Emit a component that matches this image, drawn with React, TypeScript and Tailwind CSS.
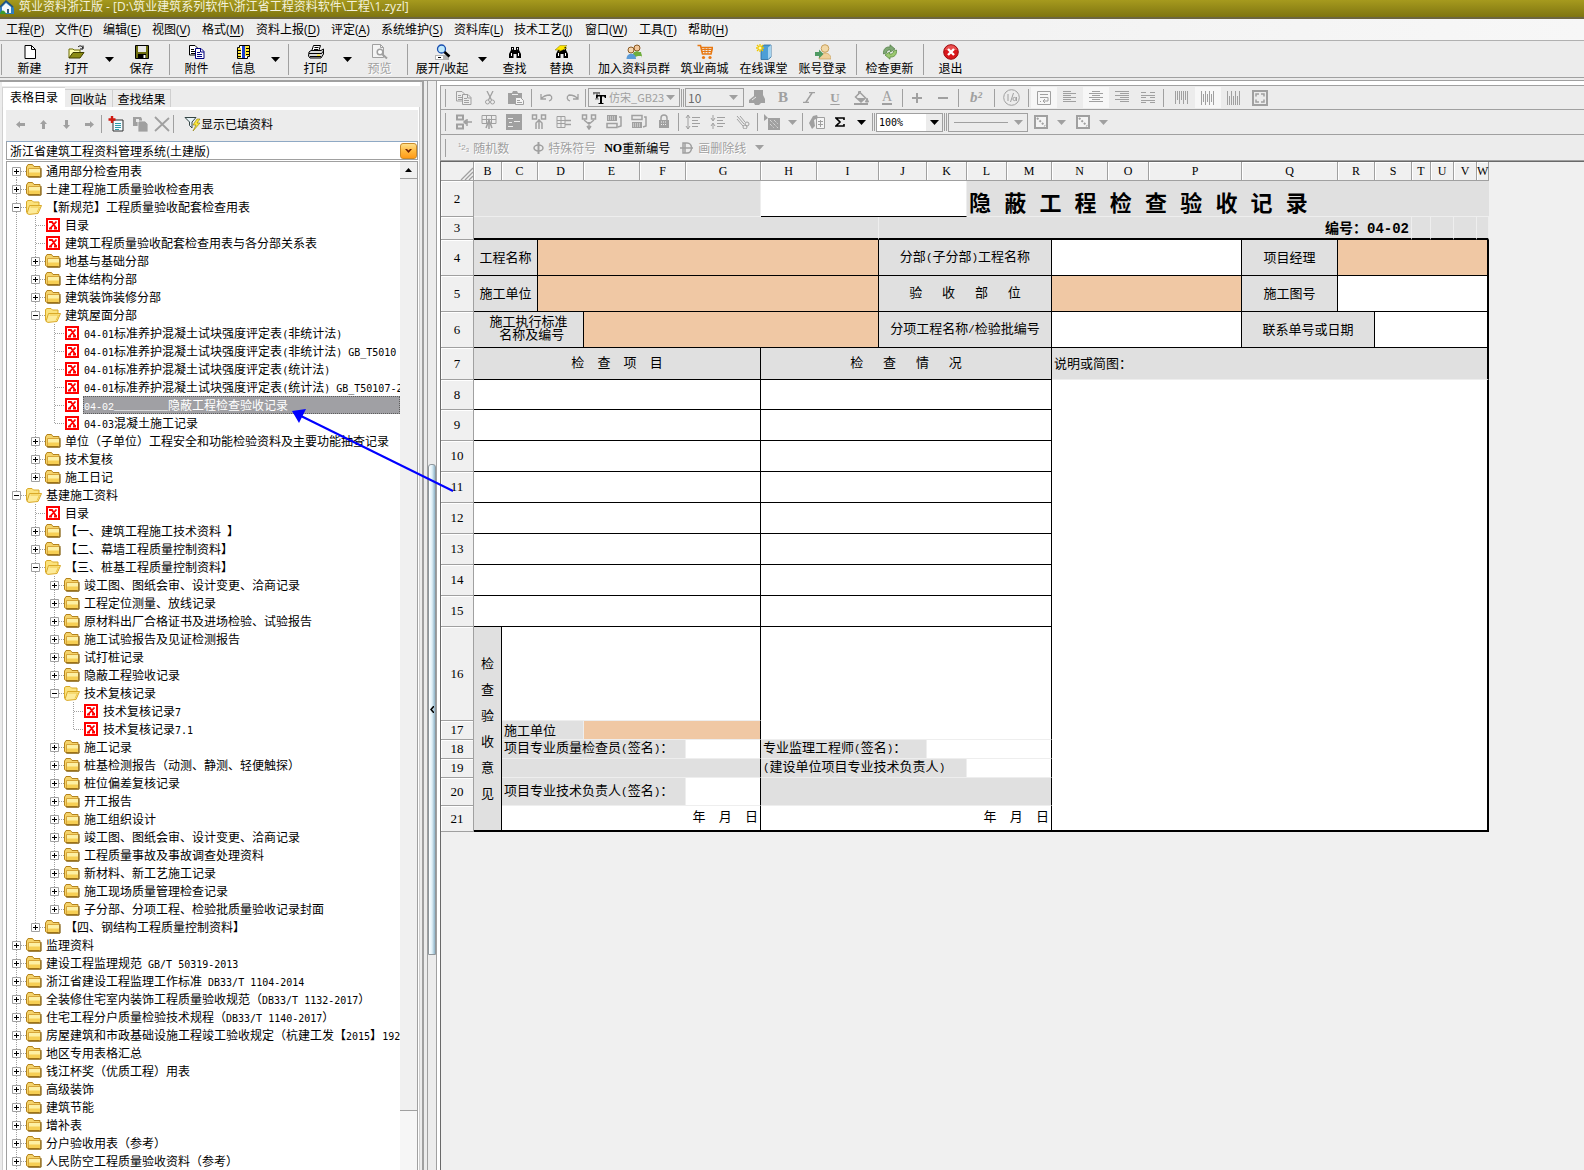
import React from "react";
import type { ReactNode } from "react";

/* ---------- shared text helpers ---------- */

const CJK = "font-['Noto_Sans_CJK_SC',sans-serif]";

/** Sets Latin runs in a half-width monospace beside full-width Chinese. */
function Mixed({ text, latin = "font-['DejaVu_Sans_Mono',monospace] text-[10px]" }: { text: string; latin?: string }) {
  return (
    <>
      {text.split(/([\x20-\x7e]+)/).map((part, i) =>
        i % 2 === 1 ? (
          <span key={i} className={latin}>
            {part}
          </span>
        ) : (
          part
        ),
      )}
    </>
  );
}

/* ---------- small drawings ---------- */

function Svg({ w = 16, h = 16, children, className = "" }: { w?: number; h?: number; children: ReactNode; className?: string }) {
  return (
    <svg width={w} height={h} viewBox={`0 0 ${w} ${h}`} className={`shrink-0 ${className}`} aria-hidden="true">
      {children}
    </svg>
  );
}

const Down = ({ color = "#000" }: { color?: string }) => (
  <Svg w={9} h={5}>
    <path d="M0 0h9L4.500 5z" fill={color} />
  </Svg>
);

const HouseLogo = () => (
  <Svg w={14} h={14}>
    <path d="M0 8L6 1l8 7v6H0z" fill="#2f7fc0" />
    <path d="M2 7l4-4 5 4v6H2z" fill="#f4f8fb" />
    <path d="M0 7L6 1l7 6" fill="none" stroke="#1d4f80" strokeWidth="1.500" />
    <path d="M0 14c1-5 5-4 6 0z" fill="#3f9a2c" />
    <path d="M7 9h2v4H7z" fill="#385f80" />
  </Svg>
);

const NewIcon = () => (
  <Svg w={12} h={14}>
    <path d="M1 .5h6.500l4 4v9H1z" fill="#fff" stroke="#000" />
    <path d="M7.500.5v4h4" fill="none" stroke="#000" />
  </Svg>
);
const OpenIcon = () => (
  <Svg w={17} h={14}>
    <path d="M1 13V4h4l1 1h6v3" fill="#ffffb0" stroke="#6b6b00" />
    <path d="M1 13l4-5.500h11L12 13z" fill="#8a8a12" stroke="#3f3f00" />
    <path d="M10 2c2-2 4-1 5 1M15 .5V4h-3" fill="none" stroke="#000" />
  </Svg>
);
const SaveIcon = () => (
  <Svg w={14} h={14}>
    <path d="M.5.5h13v13h-13z" fill="#6e6e10" stroke="#000" />
    <path d="M3 1h8v6H3z" fill="#e8e8e8" />
    <path d="M3 9h8v5H3z" fill="#000" />
    <path d="M8.500 10h2v3h-2z" fill="#fff" />
  </Svg>
);
const CopyIcon = ({ ink = "#000080", paper = "#fff", first = "#000" }: { ink?: string; paper?: string; first?: string }) => (
  <Svg w={16} h={14}>
    <path d="M.5.5h5.500l2.500 2.500v7h-8z" fill={paper} stroke={first} />
    <path d="M2 4.500h3M2 6.500h4M2 8.500h4" stroke={first} />
    <path d="M6.500 3.500h5.500l3 3v7H6.500z" fill={paper} stroke={ink} />
    <path d="M11.500 3.500v3.500H15M8 7.500h3M8 9.500h5M8 11.500h5" fill="none" stroke={ink} />
  </Svg>
);
const InfoIcon = () => (
  <Svg w={13} h={14}>
    <path d="M2.500.5h10v11h-2v2H.5V2.500h2z" fill="#fff" stroke="#000" />
    <path d="M1 3h3v10H1zM8 1h4v10H8z" fill="#ffe83a" />
    <path d="M5 1h3v12H5z" fill="#1c3fd0" />
    <path d="M1 5.500h3M1 8.500h3M1 11.500h3M9 3.500h3M9 6.500h3M9 9.500h3" stroke="#000" />
  </Svg>
);
const PrintIcon = () => (
  <Svg w={16} h={14}>
    <path d="M5.500.5h7l-2 6h-7z" fill="#fff" stroke="#000" />
    <path d="M6.500 2.500h4M6 4.500h4" stroke="#000" />
    <path d="M1 7l2-1.500h10L15.500 4v5L13 13H2L.5 11z" fill="#d8d8d8" stroke="#000" />
    <path d="M1 8.500h12M2 11.500h11M13 9l2.500-3" stroke="#000" fill="none" />
    <path d="M9 9.500h3v1.500H9z" fill="#ffe83a" />
  </Svg>
);
const PreviewIcon = () => (
  <Svg w={16} h={15}>
    <path d="M.5.5h8l3 3v10H.5z" fill="#f4f4f4" stroke="#a0a0a0" />
    <path d="M8.500.5v3h3" fill="none" stroke="#a0a0a0" />
    <circle cx="8" cy="8" r="2.800" fill="#fff" stroke="#a0a0a0" strokeWidth="1.500" />
    <path d="M10 10l5 4.500" stroke="#a0a0a0" strokeWidth="2" />
  </Svg>
);
const ExpandIcon = () => (
  <Svg w={17} h={16}>
    <path d="M1 11h14v5H1z" fill="#b4b4b4" />
    <path d="M2 12h7v3H2z" fill="#fff" />
    <path d="M4 13.500h3" stroke="#000" />
    <circle cx="7.500" cy="5" r="4" fill="#bfe9fb" stroke="#1a4fb0" strokeWidth="1.300" />
    <path d="M10.500 8l5 4.500" stroke="#000" strokeWidth="2.600" />
  </Svg>
);
const FindIcon = ({ bolt = false }: { bolt?: boolean }) => (
  <Svg w={16} h={14}>
    <path d="M4 2h3v3h2V2h3v3l2 4v4H9.500V9h-3v4H2V9l2-4z" fill="#000" />
    <path d="M4.500 8v3M11.500 8v3M5.500 3v1.500M10.500 3v1.500" stroke="#fff" />
    {bolt && <path d="M1 5l5-4.500h7L10 3h3L5 6.500 6 5z" fill="#ffe600" stroke="#8a7a00" strokeWidth=".5" />}
  </Svg>
);
const GroupIcon = () => (
  <Svg>
    <circle cx="11" cy="4" r="3" fill="#f2c79a" stroke="#8a5a24" />
    <path d="M6 14c0-9 10-9 10 0l-1-3z" fill="#6fae3d" />
    <path d="M8 8h7l.8 4H8z" fill="#6fae3d" />
    <circle cx="5" cy="6" r="3" fill="#f7d5ad" stroke="#8a5a24" />
    <path d="M.5 15c0-7 9.500-7 9.500 0z" fill="#5b9bd8" />
  </Svg>
);
const CartIcon = () => (
  <Svg>
    <path d="M.5 1.500h3l2 8.500h8.500l1.500-6.500H4" fill="none" stroke="#e87812" strokeWidth="1.600" />
    <path d="M5 5.500h10M5 7.500h9M8 4v6M11 4v6" stroke="#e87812" />
    <circle cx="6.500" cy="13.500" r="1.600" fill="#e87812" />
    <circle cx="13" cy="13.500" r="1.600" fill="#e87812" />
  </Svg>
);
const ClassIcon = () => (
  <Svg>
    <path d="M5 3l3-2h7v12l-3 2.500H5z" fill="#4d9fd6" stroke="#2a6a9c" strokeWidth=".8" />
    <path d="M12 3.500V15l3-2.500V1z" fill="#a7d4ef" />
    <path d="M4 0v8M0 4h8M1 1l6 6M7 1L1 7" stroke="#f0c800" strokeWidth="1.300" />
    <circle cx="4" cy="4" r="1.500" fill="#fff9b0" />
  </Svg>
);
const LoginIcon = () => (
  <Svg>
    <circle cx="10" cy="4.500" r="3.800" fill="#f2d9a8" stroke="#c8a05c" />
    <path d="M4 15c0-8 12-8 12 0z" fill="#efd09a" stroke="#c8a05c" strokeWidth=".7" />
    <path d="M0 8h4V5.500L8.500 10 4 14.500V12H0z" fill="#4f9a63" />
  </Svg>
);
const UpdateIcon = () => (
  <Svg>
    <path d="M1.500 10C1 5 4 2.500 8 3V.8L13 5 8.500 8V6C6 5.500 4.500 7 4.500 9z" fill="#7fa874" stroke="#4c7a3f" strokeWidth=".7" />
    <path d="M14.500 6c.5 5-2.500 7.500-6.500 7v2.200L3 11l4.500-3v2c2.500.5 4-1 4-3z" fill="#9cc870" stroke="#4c8233" strokeWidth=".7" />
  </Svg>
);
const ExitIcon = () => (
  <Svg>
    <circle cx="8" cy="8" r="7.300" fill="#d8171b" stroke="#9c0a0d" />
    <path d="M1.800 6C3 2 6 1.200 8 1.200S13 2 14.200 6z" fill="#f06a66" opacity=".7" />
    <path d="M5 5l6 6M11 5l-6 6" stroke="#fff" strokeWidth="2.400" />
  </Svg>
);

const ClosedFolder = () => (
  <Svg w={16} h={14}>
    <path d="M1.500 3.500L3 1.500h4l1.500 1.500h5l1 2v7l-1 1H2.500l-1-1z" fill="#8a6a1a" opacity=".55" transform="translate(1 1)" />
    <path d="M.5 11.500V3L2 .5h4.500L8 2.500h6v9l-1 1h-11z" fill="#f5d36a" stroke="#b4831c" />
    <path d="M3 4.500h11v7H3z" fill="#fdf0a4" />
    <path d="M3 8.500h11v3.500H3z" fill="#f6cf55" />
    <path d="M2.500 12V4.500H14" fill="none" stroke="#d7a63a" />
    <path d="M15 4v9H2" fill="none" stroke="#86600f" />
  </Svg>
);
const OpenFolder = () => (
  <Svg w={16} h={15}>
    <path d="M.5 12.500V1.500L2 .5h4l1.500 1.500H13V5" fill="#fbe27c" stroke="#d9a928" />
    <path d="M3.500 5.500h12L12 13.500l-9 .9-2-1z" fill="#fdeb9a" stroke="#d9a928" />
    <path d="M4.500 7h9l-2.500 5.500" fill="none" stroke="#f0c846" />
  </Svg>
);
const SheetIcon = () => (
  <Svg w={14} h={14}>
    <path d="M0 0h14v14H0z" fill="#f00" />
    <path d="M2 2h10v10H2z" fill="#fff" />
    <path d="M3 4h3l4 6h1M10.500 3.500L4.500 10M3 10.500h3M8 10.500h3" fill="none" stroke="#f00" strokeWidth="1.800" />
  </Svg>
);

/* ---------- title, menu and main toolbar ---------- */

const menus: [string, string, string][] = [
  ["工程", "P", "w-[49px]"],
  ["文件", "F", "w-[48px]"],
  ["编辑", "E", "w-[49px]"],
  ["视图", "V", "w-[50px]"],
  ["格式", "M", "w-[54px]"],
  ["资料上报", "D", "w-[75px]"],
  ["评定", "A", "w-[50px]"],
  ["系统维护", "S", "w-[73px]"],
  ["资料库", "L", "w-[60px]"],
  ["技术工艺", "J", "w-[71px]"],
  ["窗口", "W", "w-[54px]"],
  ["工具", "T", "w-[49px]"],
  ["帮助", "H", "w-[49px]"],
];

function MenuBar() {
  return (
    <nav className="flex h-[22px] shrink-0 items-center border-b border-[#b0b0b0] bg-gradient-to-r from-[#ececec] to-[#f7f7f7] pl-[6px] font-['Open_Sans','Noto_Sans_CJK_SC',sans-serif] text-[12px] leading-[16px] text-black">
      {menus.map(([label, key, width]) => (
        <button key={label} type="button" className={`${width} shrink-0 whitespace-nowrap text-left`}>
          {label}(<span className="underline underline-offset-2">{key}</span>)
        </button>
      ))}
    </nav>
  );
}

function BigButton({ icon, label, width = "w-[47px]", disabled = false }: { icon: ReactNode; label: string; width?: string; disabled?: boolean }) {
  return (
    <button
      type="button"
      disabled={disabled}
      className={`${width} flex shrink-0 flex-col items-center whitespace-nowrap ${disabled ? "text-[#a0a0a0] [text-shadow:1px_1px_0_#fff]" : "text-black"}`}
    >
      <span className="flex h-[17px] items-center">{icon}</span>
      <span className="leading-[15px]">{label}</span>
    </button>
  );
}

const BigSep = () => <span className="ml-1 mr-[3px] h-[31px] w-px shrink-0 bg-[#a0a0a0]" />;
const BigDrop = ({ label, width = "w-[17px]" }: { label: string; width?: string }) => (
  <button type="button" aria-label={label} className={`${width} flex shrink-0 items-center justify-center`}>
    <Down />
  </button>
);

function MainToolbar() {
  return (
    <div className="flex h-[37px] shrink-0 items-center border-b border-[#a0a0a0] bg-[#ececec] text-[12px]">
      <span className="mr-1 h-[31px] w-[2px] shrink-0 border-r border-[#a0a0a0]" />
      <BigButton icon={<NewIcon />} label="新建" />
      <BigButton icon={<OpenIcon />} label="打开" />
      <BigDrop label="打开选项" width="w-[18px]" />
      <BigButton icon={<SaveIcon />} label="保存" />
      <BigSep />
      <BigButton icon={<CopyIcon />} label="附件" />
      <BigButton icon={<InfoIcon />} label="信息" />
      <BigDrop label="信息选项" />
      <BigSep />
      <BigButton icon={<PrintIcon />} label="打印" />
      <BigDrop label="打印选项" />
      <BigButton icon={<PreviewIcon />} label="预览" disabled />
      <BigSep />
      <BigButton icon={<ExpandIcon />} label="展开/收起" width="w-[62px]" />
      <BigDrop label="展开选项" width="w-[18px]" />
      <BigButton icon={<FindIcon />} label="查找" />
      <BigButton icon={<FindIcon bolt />} label="替换" />
      <BigSep />
      <BigButton icon={<GroupIcon />} label="加入资料员群" width="w-[82px]" />
      <BigButton icon={<CartIcon />} label="筑业商城" width="w-[59px]" />
      <BigButton icon={<ClassIcon />} label="在线课堂" width="w-[59px]" />
      <BigButton icon={<LoginIcon />} label="账号登录" width="w-[59px]" />
      <BigSep />
      <BigButton icon={<UpdateIcon />} label="检查更新" width="w-[59px]" />
      <BigSep />
      <BigButton icon={<ExitIcon />} label="退出" />
    </div>
  );
}

/* ---------- directory tree ---------- */

type Kind = "+" | "-" | "x";
type Node = [depth: number, kind: Kind, label: string];

const nodes: Node[] = [
  [0, "+", "通用部分检查用表"],
  [0, "+", "土建工程施工质量验收检查用表"],
  [0, "-", "【新规范】工程质量验收配套检查用表"],
  [1, "x", "目录"],
  [1, "x", "建筑工程质量验收配套检查用表与各分部关系表"],
  [1, "+", "地基与基础分部"],
  [1, "+", "主体结构分部"],
  [1, "+", "建筑装饰装修分部"],
  [1, "-", "建筑屋面分部"],
  [2, "x", "04-01标准养护混凝土试块强度评定表(非统计法)"],
  [2, "x", "04-01标准养护混凝土试块强度评定表(非统计法) GB_T5010"],
  [2, "x", "04-01标准养护混凝土试块强度评定表(统计法)"],
  [2, "x", "04-01标准养护混凝土试块强度评定表(统计法) GB_T50107-2"],
  [2, "x", "04-02_________隐蔽工程检查验收记录"],
  [2, "x", "04-03混凝土施工记录"],
  [1, "+", "单位（子单位）工程安全和功能检验资料及主要功能抽查记录"],
  [1, "+", "技术复核"],
  [1, "+", "施工日记"],
  [0, "-", "基建施工资料"],
  [1, "x", "目录"],
  [1, "+", "【一、建筑工程施工技术资料 】"],
  [1, "+", "【二、幕墙工程质量控制资料】"],
  [1, "-", "【三、桩基工程质量控制资料】"],
  [2, "+", "竣工图、图纸会审、设计变更、洽商记录"],
  [2, "+", "工程定位测量、放线记录"],
  [2, "+", "原材料出厂合格证书及进场检验、试验报告"],
  [2, "+", "施工试验报告及见证检测报告"],
  [2, "+", "试打桩记录"],
  [2, "+", "隐蔽工程验收记录"],
  [2, "-", "技术复核记录"],
  [3, "x", "技术复核记录7"],
  [3, "x", "技术复核记录7.1"],
  [2, "+", "施工记录"],
  [2, "+", "桩基检测报告（动测、静测、轻便触探）"],
  [2, "+", "桩位偏差复核记录"],
  [2, "+", "开工报告"],
  [2, "+", "施工组织设计"],
  [2, "+", "竣工图、图纸会审、设计变更、洽商记录"],
  [2, "+", "工程质量事故及事故调查处理资料"],
  [2, "+", "新材料、新工艺施工记录"],
  [2, "+", "施工现场质量管理检查记录"],
  [2, "+", "子分部、分项工程、检验批质量验收记录封面"],
  [1, "+", "【四、钢结构工程质量控制资料】"],
  [0, "+", "监理资料"],
  [0, "+", "建设工程监理规范 GB/T 50319-2013"],
  [0, "+", "浙江省建设工程监理工作标准 DB33/T 1104-2014"],
  [0, "+", "全装修住宅室内装饰工程质量验收规范（DB33/T 1132-2017）"],
  [0, "+", "住宅工程分户质量检验技术规程（DB33/T 1140-2017）"],
  [0, "+", "房屋建筑和市政基础设施工程竣工验收规定（杭建工发【2015】192"],
  [0, "+", "地区专用表格汇总"],
  [0, "+", "钱江杯奖（优质工程）用表"],
  [0, "+", "高级装饰"],
  [0, "+", "建筑节能"],
  [0, "+", "增补表"],
  [0, "+", "分户验收用表（参考）"],
  [0, "+", "人民防空工程质量验收资料（参考）"],
];

const SELECTED = 13;

/** True when another node of the given level follows before its parent ends. */
function continues(index: number, level: number) {
  if (level === 0) return true;
  for (let i = index + 1; i < nodes.length; i++) {
    if (nodes[i][0] < level) return false;
    if (nodes[i][0] === level) return true;
  }
  return false;
}

function TreeRow({ index }: { index: number }) {
  const [depth, kind, label] = nodes[index];
  const selected = index === SELECTED;
  const cells = Array.from({ length: depth + 1 }, (_, level) => level);
  return (
    <li className="flex h-[18px] items-center overflow-hidden whitespace-nowrap" role="treeitem" aria-selected={selected} aria-level={depth + 1}>
      {cells.map((level) => {
        const own = level === depth;
        const more = continues(index, level);
        return (
          <svg key={level} width="19" height="18" viewBox="0 0 19 18" className="shrink-0" aria-hidden="true">
            {(own || more) && (
              <path
                d={own && !more ? "M9.5 0V9" : own && index === 0 ? "M9.5 9V18" : "M9.5 0V18"}
                stroke="#a0a0a0"
                strokeDasharray="1 1"
                fill="none"
              />
            )}
            {own && <path d="M10 9.500H19" stroke="#a0a0a0" strokeDasharray="1 1" />}
            {own && kind !== "x" && (
              <>
                <path d="M5.500 5.500h8v8h-8z" fill="#fff" stroke="#a0a0a0" />
                <path d={kind === "+" ? "M7 9.500h5M9.500 7v5" : "M7 9.500h5"} stroke="#000" />
              </>
            )}
          </svg>
        );
      })}
      <span className="flex w-4 shrink-0 items-center justify-center">
        {kind === "+" ? <ClosedFolder /> : kind === "-" ? <OpenFolder /> : <SheetIcon />}
      </span>
      <span
        className={
          selected
            ? "ml-[3px] h-[18px] flex-1 border border-dotted border-[#5c5c5c] bg-[#a0a0a4] leading-[15px] text-white"
            : "ml-[4px] h-[18px] flex-1 leading-[17px]"
        }
      >
        {selected ? <Mixed text={label} latin="font-['Liberation_Mono',monospace] text-[10px]" /> : <Mixed text={label} />}
      </span>
    </li>
  );
}

const panelTools: [string, ReactNode][] = [
  ["左移", <Svg w={9} h={9}><path d="M0 4.500L4 1v2h5v3H4v2z" fill="#a0a0a0" /></Svg>],
  ["上移", <Svg w={9} h={9}><path d="M4.500 0L8 4H6v5H3V4H1z" fill="#a0a0a0" /></Svg>],
  ["下移", <Svg w={9} h={9}><path d="M4.500 9L8 5H6V0H3v5H1z" fill="#a0a0a0" /></Svg>],
  ["右移", <Svg w={9} h={9}><path d="M9 4.500L5 1v2H0v3h5v2z" fill="#a0a0a0" /></Svg>],
];

const SmallSep = () => <span className="h-[18px] w-px shrink-0 bg-[#a0a0a0]" />;

function SidePanel() {
  return (
    <aside className="flex w-[424px] shrink-0 flex-col border-r-2 border-[#a0a0a0] border-t border-t-[#a0a0a0] bg-[#ececec] pl-[2px] pr-[2px]">
      <div className="h-1 shrink-0 bg-white" />
      <div className="flex h-[21px] shrink-0 items-end text-[12px]" role="tablist">
        <button type="button" role="tab" aria-selected="true" className="h-[20px] w-[63px] border-l border-t border-[#d4d4d4] bg-white pb-[2px] leading-[18px]">
          表格目录
        </button>
        <button type="button" role="tab" aria-selected="false" className="h-[18px] w-[48px] border-r border-t border-[#cfcfcf] leading-[17px]">
          回收站
        </button>
        <button type="button" role="tab" aria-selected="false" className="h-[18px] w-[58px] border-r border-t border-[#cfcfcf] leading-[17px]">
          查找结果
        </button>
      </div>
      <div className="flex min-h-0 flex-1 flex-col border-l border-r border-[#d0d0d0] bg-white pl-[3px] pr-px pt-[3px]">
        <div className="flex h-[31px] shrink-0 items-center bg-[#ececec] pb-[3px]">
          <span className="flex items-center pl-[3px]">
            {panelTools.map(([name, icon]) => (
              <button key={name} type="button" aria-label={name} className="flex h-5 w-[23px] items-center justify-center">
                {icon}
              </button>
            ))}
          </span>
          <SmallSep />
          <button type="button" aria-label="添加" className="flex h-5 w-[27px] items-center justify-center">
            <Svg>
              <path d="M5 4h10v11H5z" fill="#f4fbff" stroke="#303030" />
              <path d="M7 7.500h6M7 9.500h6M7 11.500h6M7 13.500h4" stroke="#2a9aa8" />
              <path d="M4 0v7M.5 3.500h7" stroke="#d01a10" strokeWidth="2.400" />
            </Svg>
          </button>
          <button type="button" aria-label="复制" className="flex h-5 w-[22px] items-center justify-center">
            <Svg w={15}>
              <path d="M0 1h8l1 2v7H0z" fill="#a0a0a0" />
              <path d="M5 5h7l3 3v8H5z" fill="#a0a0a0" stroke="#ececec" strokeWidth=".8" />
              <path d="M3 3h3v3H3z" fill="#ececec" />
            </Svg>
          </button>
          <button type="button" aria-label="删除" className="flex h-5 w-[22px] items-center justify-center">
            <Svg>
              <path d="M1 1l14 14M15 2L1 15" stroke="#a0a0a0" strokeWidth="1.800" />
            </Svg>
          </button>
          <SmallSep />
          <button type="button" className="flex items-center pl-[10px] text-[12px] leading-[18px]">
            <Svg w={17}>
              <path d="M1 1.500h11L8 6v6L5.500 9.500V6z" fill="#e8f4f8" stroke="#344" />
              <path d="M13 3l-4 6h3l-3 6 7-8h-3l3-4z" fill="#ffe83a" stroke="#8a7a00" strokeWidth=".6" />
            </Svg>
            显示已填资料
          </button>
        </div>
        <div className="flex h-[19px] shrink-0 items-center border border-[#a0a0a0] border-t-[#8fa9c4] bg-white pl-[3px] text-[12px]">
          <select aria-label="资料管理系统" className="h-[17px] flex-1 appearance-none bg-white leading-[17px] outline-none" defaultValue="土建版">
            <option value="土建版">浙江省建筑工程资料管理系统(土建版)</option>
          </select>
          <span className="flex h-[16px] w-[17px] items-center justify-center rounded-[3px] border border-[#c98a2a] bg-gradient-to-b from-[#ffe08a] via-[#ffb93c] to-[#ff9a14]">
            <Svg w={7} h={4}>
              <path d="M0 0h2l1.500 1.500L5 0h2L3.500 4z" fill="#6b1c00" />
            </Svg>
          </span>
        </div>
        <div className="mt-px flex min-h-0 flex-1 border-l border-r border-t border-[#a0a0a0]">
          <ul className="min-w-0 flex-1 overflow-hidden text-[12px]" role="tree">
            {nodes.map((_, i) => (
              <TreeRow key={i} index={i} />
            ))}
          </ul>
          <div className="flex w-[17px] shrink-0 flex-col bg-[#f6f6f6]">
            <button type="button" aria-label="向上滚动" className="flex h-[17px] w-full shrink-0 items-center justify-center border-b border-[#a0a0a0] bg-[#f0f0f0]">
              <Svg w={7} h={4}>
                <path d="M0 4h7L3.500 0z" fill="#000" />
              </Svg>
            </button>
            <div className="flex-[932] border-b border-[#a0a0a0] bg-[#f0f0f0]" />
            <div className="flex-[59]" />
          </div>
        </div>
      </div>
    </aside>
  );
}

function Splitter() {
  return (
    <div className="ml-[3px] flex w-[10px] shrink-0 flex-col border-l border-r border-[#a0a0a0] bg-[#ececec]">
      <div className="flex-[384]" />
      <button
        type="button"
        aria-label="收起目录"
        className="flex flex-[490] items-center justify-center rounded-t-[3px] border border-[#8f979c] bg-gradient-to-r from-white via-[#dff0f8] to-[#8fb4c8]"
      >
        <Svg w={4} h={7}>
          <path d="M4 0L1 3.500 4 7" fill="none" stroke="#000" strokeWidth="1.500" />
        </Svg>
      </button>
      <div className="flex-[215]" />
    </div>
  );
}

/* ---------- formatting toolbars ---------- */

const G = "#a0a0a0";
const Grip = () => <span className="ml-1 mr-[5px] h-[18px] w-px shrink-0 bg-[#a0a0a0]" />;
const Sep = () => <span className="ml-[2px] mr-px h-[18px] w-px shrink-0 bg-[#a0a0a0]" />;
const DoubleSep = () => <span className="mx-px h-[18px] w-[3px] shrink-0 border-l border-r border-[#a0a0a0]" />;

function Tool({ name, children, width = "w-[26px]", on = false, enabled = false }: { name: string; children: ReactNode; width?: string; on?: boolean; enabled?: boolean }) {
  return (
    <button
      type="button"
      disabled={!enabled}
      aria-label={name}
      className={`${width} flex h-[21px] shrink-0 items-center justify-center text-[#a0a0a0] ${on ? "bg-[#f7f7f7]" : ""}`}
    >
      {children}
    </button>
  );
}

const Lines = ({ rows }: { rows: [number, number][] }) => (
  <Svg w={14} h={13}>
    {rows.map(([x, len], i) => (
      <path key={i} d={`M${x} ${i * 2 + 0.5}h${len}`} stroke={G} />
    ))}
  </Svg>
);
const Bars = ({ bars }: { bars: [number, number][] }) => (
  <Svg w={14} h={14}>
    {bars.map(([y, len], i) => (
      <path key={i} d={`M${i * 2 + 0.5} ${y}v${len}`} stroke={G} />
    ))}
  </Svg>
);
const BorderIcon = () => (
  <Svg w={14} h={14}>
    <path d="M1 1h12v12H1z" fill="#f4f4f4" stroke={G} strokeWidth="2" />
    <path d="M3 3l8 8" stroke={G} strokeWidth="2" strokeDasharray="2 1.500" />
  </Svg>
);

const rowTools: [string, ReactNode][] = [
  ["插入单元格", <><path d="M1 1.500h6v4H1zM1 10.500h6v4H1z" fill="#ececec" stroke={G} strokeWidth="2" /><path d="M8 8h8M10 6L8 8l2 2M11 8V5M11 8v4" fill="none" stroke={G} strokeWidth="1.500" /></>],
  ["删除单元格", <><path d="M1 1.500h14v8H1zM1 5.500h14M5.500 1v8M10.500 1v8" fill="none" stroke={G} /><path d="M5 14l3-8 3 8M8 6v9" fill="none" stroke={G} strokeWidth="1.500" /></>],
  ["单元格", <><path d="M0 0h16v16H0z" fill={G} /><path d="M2 4.500h5M3 8.500h3M2 12.500h5M8 7.500h6" stroke="#ececec" /></>],
  ["插入列", <><path d="M1.500 1h4v4h-4zM10.500 1h4v4h-4z" fill="none" stroke={G} strokeWidth="1.500" /><path d="M8 5v10M5 15V9l3-3 3 3v6" fill="none" stroke={G} strokeWidth="1.500" /></>],
  ["插入行", <><path d="M1 2.500h8v11H1zM1 6.500h8M1 9.500h8M5 2v12" fill="none" stroke={G} /><path d="M9 6.500h6M9 10.500h6" stroke={G} strokeWidth="1.500" /></>],
  ["合并", <><path d="M1.500 1h4v4h-4zM10.500 1h4v4h-4z" fill="none" stroke={G} strokeWidth="1.500" /><path d="M3 6l5 4 5-4M8 8v7M6 12l2 3 2-3" fill="none" stroke={G} strokeWidth="1.500" /></>],
  ["追加行", <><path d="M1 1h10v6H1z" fill={G} /><path d="M2 3h8M2 5h8" stroke="#ececec" strokeDasharray="1 1" /><path d="M1 9.500h10v4H1zM13 3h2v9l-3 1" fill="none" stroke={G} strokeWidth="1.500" /></>],
  ["删除行", <><path d="M1 8h10v6H1z" fill={G} /><path d="M2 10h8M2 12h8" stroke="#ececec" strokeDasharray="1 1" /><path d="M1 1.500h10v4H1zM13 3h2v9l-3 1" fill="none" stroke={G} strokeWidth="1.500" /></>],
  ["锁定", <><path d="M3 6h10v8H3z" fill={G} /><path d="M5 7V4c0-4 6-4 6 0v3" fill="none" stroke={G} strokeWidth="1.500" /><path d="M5 8h6M5 10.500h6" stroke="#ececec" strokeDasharray="1 1" /></>],
];

function TextTool({ icon, label, className = "" }: { icon: ReactNode; label: string; className?: string }) {
  return (
    <button type="button" disabled className={`flex shrink-0 items-center gap-1 text-[#a0a0a0] [text-shadow:1px_1px_0_#fff] ${className}`}>
      {icon}
      {label}
    </button>
  );
}

function FormatBars() {
  return (
    <div className="shrink-0 border-b border-l border-t border-[#a0a0a0] text-[12px]">
      <div className="flex h-[24px] items-center border-b border-[#a0a0a0]">
        <Grip />
        <Tool name="复制"><CopyIcon ink={G} first={G} paper="#ececec" /></Tool>
        <Tool name="剪切">
          <Svg w={10} h={14}>
            <path d="M2 0l4.500 9M8 0L3.500 9" stroke={G} strokeWidth="1.300" />
            <circle cx="2.500" cy="11" r="2" fill="none" stroke={G} />
            <circle cx="7.500" cy="11" r="2" fill="none" stroke={G} />
          </Svg>
        </Tool>
        <Tool name="粘贴">
          <Svg w={16} h={14}>
            <path d="M0 2h4l1-2h4l1 2h4v11H0z" fill={G} />
            <path d="M4 3.500h6" stroke="#ececec" />
            <path d="M7.500 6.500h5l3 3v4h-8z" fill="#f4f4f4" stroke={G} />
            <path d="M9 9.500h3M9 11.500h5" stroke={G} />
          </Svg>
        </Tool>
        <Sep />
        <Tool name="撤销">
          <Svg w={13} h={8}><path d="M1 0v5h5M1 5c3-4 6-4 9-4 3 2 2 5-1 6" fill="none" stroke={G} strokeWidth="1.300" /></Svg>
        </Tool>
        <Tool name="重做">
          <Svg w={13} h={8}><path d="M12 0v5H7M12 5C9 1 6 1 3 1 0 3 1 6 4 7" fill="none" stroke={G} strokeWidth="1.300" /></Svg>
        </Tool>
        <span className="h-[18px] w-[3px] shrink-0 border-l border-[#a0a0a0]" />
        <div className="flex h-[19px] w-[92px] shrink-0 items-center border border-[#a0a0a0] pl-1 pr-1">
          <Svg w={13} h={13}>
            <path d="M0 1h7v2.500H6L5 2.500v5h1v1H2v-1h1v-5l-2 1H0z" fill="#777" />
            <path d="M3 4h10v3h-1l-1-1.500H9V12h1.500v1h-5v-1H7V5.500H5L4 7H3z" fill="#000" />
          </Svg>
          <select aria-label="字体" disabled className="ml-[3px] h-[17px] w-[56px] appearance-none overflow-hidden bg-transparent text-[11px] leading-[17px] text-[#a0a0a0] opacity-100" defaultValue="f">
            <option value="f">仿宋_GB23</option>
          </select>
          <span className="flex-1" />
          <Down color={G} />
        </div>
        <DoubleSep />
        <div className="flex h-[19px] w-[59px] shrink-0 items-center border border-[#a0a0a0] pl-[2px] pr-[5px]">
          <select aria-label="字号" disabled className="h-[17px] flex-1 appearance-none bg-transparent leading-[17px] text-[#6a6a6a] opacity-100" defaultValue="10">
            <option>10</option>
          </select>
          <Down color={G} />
        </div>
        <Tool name="格式刷"><Svg w={16}><path d="M5 0h9v5l2 4v4h-4l-2 2H6l-1-2H0v-3l5-4z" fill={G} /><path d="M3 10l4-3" stroke="#ececec" /></Svg></Tool>
        <Tool name="加粗"><b className="font-['Liberation_Serif',serif] text-[15px]">B</b></Tool>
        <Tool name="倾斜"><Svg w={12} h={11}><path d="M6 .5h6M0 10.500h6M9 1L3 10" stroke={G} strokeWidth="1.500" /></Svg></Tool>
        <Tool name="下划线"><b className="font-['Liberation_Serif',serif] text-[13px] leading-[14px] underline underline-offset-2">U</b></Tool>
        <Tool name="填充">
          <Svg w={15} h={14}><path d="M6 1.500l5.500 5.500L7 11 1.500 6z" fill="#ececec" stroke={G} strokeWidth="1.500" /><path d="M3 7h8l-4 4z" fill={G} /><path d="M4.500 4V.5H7" fill="none" stroke={G} /><path d="M13 7l1.500 4h-3z" fill={G} stroke={G} /><path d="M0 13h14" stroke={G} strokeWidth="2" /></Svg>
        </Tool>
        <Tool name="字体颜色"><span className="h-[15px] border-b-2 border-[#a0a0a0] font-['Liberation_Serif',serif] text-[14px] leading-[13px]">A</span></Tool>
        <Sep />
        <Tool name="增大"><Svg w={10} h={10}><path d="M5 0v10M0 5h10" stroke={G} strokeWidth="2" /></Svg></Tool>
        <Tool name="减小"><Svg w={10} h={10}><path d="M0 5h10" stroke={G} strokeWidth="2" /></Svg></Tool>
        <Sep />
        <Tool name="上标" width="w-[32px]"><b className="font-['Liberation_Serif',serif] text-[15px] italic">b²</b></Tool>
        <Sep />
        <Tool name="分数" width="w-[30px]">
          <Svg w={17} h={17}><circle cx="8.500" cy="8.500" r="7.800" fill="none" stroke={G} /><path d="M5 5v7M10.500 4l-3 9" stroke={G} /><circle cx="11.500" cy="10" r="1.600" fill="none" stroke={G} /><path d="M13.500 8v4" stroke={G} /></Svg>
        </Tool>
        <Sep />
        <span className="w-px shrink-0" />
        <Tool name="自动换行" on><Svg w={14} h={14}><path d="M.5.5h13v13H.5zM3 3.500h8M3 6.500h8v3.500H6M8 8l-2 2 2 2M3 10.500h1" fill="none" stroke={G} /></Svg></Tool>
        <Tool name="左对齐"><Lines rows={[[0, 8], [0, 13], [0, 8], [0, 13], [0, 8], [0, 13]]} /></Tool>
        <Tool name="居中" on><Lines rows={[[3, 8], [0, 14], [3, 8], [0, 14], [3, 8], [0, 14]]} /></Tool>
        <Tool name="右对齐"><Lines rows={[[0, 14], [5, 9], [0, 14], [5, 9], [0, 14], [5, 9]]} /></Tool>
        <Tool name="分散对齐">
          <Svg w={14} h={12}><path d="M0 .5h5M9 .5h5M0 3.500h14M0 5.500h5M9 5.500h5M0 8.500h14M0 10.500h5M9 10.500h5" stroke={G} /></Svg>
        </Tool>
        <Sep />
        <span className="w-1 shrink-0" />
        <Tool name="顶端对齐"><Bars bars={[[0, 13], [0, 9], [0, 13], [0, 9], [0, 13], [0, 9], [0, 13]]} /></Tool>
        <Tool name="垂直居中" on><Bars bars={[[0, 14], [3, 8], [0, 14], [3, 8], [0, 14], [3, 8], [0, 14]]} /></Tool>
        <Tool name="底端对齐"><Bars bars={[[0, 14], [5, 9], [0, 14], [5, 9], [0, 14], [5, 9], [0, 14]]} /></Tool>
        <Tool name="边框"><Svg><path d="M1 1h14v14H1z" fill="none" stroke={G} strokeWidth="2" /><path d="M4 6.500V4h3M9 4h3v2.500M12 9.500V12H9M7 12H4V9.500" fill="none" stroke={G} strokeWidth="1.500" /></Svg></Tool>
      </div>
      <div className="flex h-[25px] items-center border-b border-[#a0a0a0]">
        <Grip />
        {rowTools.map(([name, art]) => (
          <Tool key={name} name={name} width="w-[25px]"><Svg>{art}</Svg></Tool>
        ))}
        <Sep />
        <Tool name="增加行距" width="w-[25px]"><Svg w={15} h={14}><path d="M3 0v14M1 3l2-3 2 3M1 11l2 3 2-3M7 2.500h8M7 5.500h6M7 8.500h8M7 11.500h6" fill="none" stroke={G} /></Svg></Tool>
        <Tool name="减少行距" width="w-[25px]"><Svg w={15} h={14}><path d="M3 0v5M1 3l2 3 2-3M3 14V9M1 11l2-3 2 3M7 2.500h8M7 5.500h6M7 8.500h8M7 11.500h6" fill="none" stroke={G} /></Svg></Tool>
        <Tool name="链接" width="w-[25px]"><Svg w={14} h={14}><path d="M1 1l7 8M4 1l5 6M1 4l6 7" stroke={G} /><circle cx="11" cy="9" r="2" fill="none" stroke={G} /><circle cx="9" cy="12" r="2" fill="none" stroke={G} /></Svg></Tool>
        <Sep />
        <Tool name="选择区域" width="w-[25px]"><Svg><path d="M4 4h12v12H4z" fill={G} /><path d="M0 0v7l4-3z" fill={G} /><path d="M6 6l8 8M6 10l4 4M10 6l4 4" stroke="#ececec" strokeDasharray="1 1" /></Svg></Tool>
        <Tool name="选择区域选项" width="w-[16px]"><Down color={G} /></Tool>
        <Sep />
        <Tool name="公式" width="w-[25px]"><Svg><path d="M7.500 3.500h8v11h-8z" fill="#f4f4f4" stroke={G} /><path d="M9 7.500h5M9 10.500h5M11.500 6v7" stroke={G} /><path d="M0 9l4-7 4-1 1 3-4 2 1 6-3 3z" fill={G} /></Svg></Tool>
        <Tool name="求和" width="w-[22px]" enabled><Svg w={10} h={10}><path d="M9 3V1H1l4 4-4 4h8V7" fill="none" stroke="#000" strokeWidth="1.600" /></Svg></Tool>
        <Tool name="求和选项" width="w-[20px]" enabled><Down /></Tool>
        <DoubleSep />
        <div className="flex h-[19px] w-[67px] shrink-0 items-center border border-[#a0a0a0] bg-white pl-[2px]">
          <select aria-label="缩放" className="h-[17px] flex-1 appearance-none bg-white font-['DejaVu_Sans_Mono',monospace] text-[10px] leading-[17px]" defaultValue="100%">
            <option>100%</option>
          </select>
          <span className="flex h-[17px] w-[16px] items-center justify-center bg-[#ececec]"><Down /></span>
        </div>
        <DoubleSep />
        <div className="flex h-[19px] w-[80px] shrink-0 items-center border border-[#a0a0a0] pl-[5px] pr-1">
          <select aria-label="线型" disabled className="h-px w-[54px] appearance-none bg-[#a0a0a0] opacity-100" />
          <span className="flex-1" />
          <Down color={G} />
        </div>
        <Tool name="边框线" width="w-[25px]"><BorderIcon /></Tool>
        <Tool name="边框线选项" width="w-[17px]"><Down color={G} /></Tool>
        <Tool name="斜线" width="w-[25px]"><BorderIcon /></Tool>
        <Tool name="斜线选项" width="w-[17px]"><Down color={G} /></Tool>
      </div>
      <div className="flex h-[25px] items-center">
        <Grip />
        <TextTool
          className="ml-[7px]"
          label="随机数"
          icon={<span className="flex items-center font-['Liberation_Sans',sans-serif] text-[8px] leading-[12px]"><sup className="top-[-3px]">1</sup>2<sub className="bottom-[-2px]">3</sub></span>}
        />
        <TextTool
          className="ml-[24px]"
          label="特殊符号"
          icon={<Svg w={11} h={12}><path d="M5.500 0v12" stroke={G} strokeWidth="2" /><ellipse cx="5.500" cy="6" rx="4.500" ry="3" fill="none" stroke={G} strokeWidth="1.500" /></Svg>}
        />
        <button type="button" className="ml-[8px] flex shrink-0 items-center text-black">
          <span className="font-['Liberation_Serif',serif] text-[12px] font-bold">NO</span>重新编号
        </button>
        <TextTool
          className="ml-[10px]"
          label="画删除线"
          icon={<Svg w={14} h={12}><path d="M3 1h4c6 0 6 10 0 10H3zM5 1v10" fill="none" stroke={G} strokeWidth="1.500" /><path d="M0 6h13" stroke={G} strokeWidth="1.500" /></Svg>}
        />
        <Tool name="删除线选项"><Down color={G} /></Tool>
      </div>
    </div>
  );
}

/* ---------- spreadsheet ---------- */

const columns: [string, string][] = [
  ["B", "w-[28px]"], ["C", "w-[36px]"], ["D", "w-[46px]"], ["E", "w-[56px]"], ["F", "w-[46px]"], ["G", "w-[75px]"],
  ["H", "w-[56px]"], ["I", "w-[62px]"], ["J", "w-[48px]"], ["K", "w-[40px]"], ["L", "w-[40px]"], ["M", "w-[45px]"],
  ["N", "w-[56px]"], ["O", "w-[41px]"], ["P", "w-[93px]"], ["Q", "w-[96px]"], ["R", "w-[37px]"], ["S", "w-[37px]"],
  ["T", "w-[19px]"], ["U", "w-[23px]"], ["V", "w-[23px]"], ["W", "w-[12px]"],
];

const fills = { gray: "bg-[#e0e0e0]", white: "bg-white", orange: "bg-[#f0c8a4]" };
const rights = { black: "border-r border-r-black", light: "border-r border-r-[#eeeeee]", thick: "border-r-2 border-r-black", none: "" };
const bottoms = { black: "border-b border-b-black", light: "border-b border-b-[#eeeeee]", thick: "border-b-2 border-b-black", none: "" };

function Cell({
  span = 1, rows = 1, fill = "white", r = "black", b = "black", text, className = "text-center",
}: {
  span?: number; rows?: number; fill?: keyof typeof fills; r?: keyof typeof rights; b?: keyof typeof bottoms; text?: string; className?: string;
}) {
  return (
    <td colSpan={span} rowSpan={rows} className={`overflow-hidden whitespace-pre p-0 pb-[2px] ${fills[fill]} ${rights[r]} ${bottoms[b]} ${className}`}>
      {text && <Mixed text={text} latin="font-['Liberation_Mono',monospace] text-[11px]" />}
    </td>
  );
}

function Row({ n, height, children }: { n: number; height: string; children: ReactNode }) {
  return (
    <tr className={height}>
      <th
        scope="row"
        className="border-b border-r border-[#a0a0a0] bg-[#f0f0f0] p-0 pb-px text-center font-['Liberation_Serif',serif] text-[13px] font-normal shadow-[inset_1px_1px_0_#fff]"
      >
        {n}
      </th>
      {children}
    </tr>
  );
}

function Sheet() {
  const left = "pl-[2px] text-left";
  return (
    <div className="min-h-0 flex-1 overflow-hidden border-l border-t border-[#696969] bg-[#f0f0f0]">
      <table className={`w-[1048px] table-fixed border-separate border-spacing-0 ${CJK} text-[13px] leading-[13px] text-black`}>
        <colgroup>
          <col className="w-[33px]" />
          {columns.map(([name, width]) => (
            <col key={name} className={width} />
          ))}
        </colgroup>
        <thead>
          <tr className="h-[19px]">
            <td className="border-b border-r border-[#a0a0a0] bg-[#f0f0f0] p-0 align-bottom">
              <Svg w={13} h={13} className="ml-auto block">
                <path d="M1 13L13 1M5 13l8-8M9 13l4-4" stroke={G} strokeWidth="1.300" />
              </Svg>
            </td>
            {columns.map(([name]) => (
              <th
                key={name}
                scope="col"
                className="border-b border-r border-[#a0a0a0] bg-[#f0f0f0] p-0 text-center font-['Liberation_Serif',serif] text-[12px] font-normal shadow-[inset_1px_1px_0_#fff]"
              >
                {name}
              </th>
            ))}
          </tr>
        </thead>
        <tbody>
          <Row n={2} height="h-[36px]">
            <Cell span={6} fill="gray" r="light" b="light" />
            <Cell span={2} r="none" />
            <Cell span={2} r="light" />
            <td colSpan={12} className="whitespace-pre border-b border-b-[#eeeeee] bg-[#e0e0e0] p-0 pl-[2px] text-left align-bottom font-['Liberation_Mono','Noto_Sans_CJK_SC',monospace] text-[22px] font-bold leading-[20px]">
              隐 蔽 工 程 检 查 验 收 记 录
            </td>
          </Row>
          <Row n={3} height="h-[23px]">
            <Cell span={8} fill="gray" r="light" b="thick" />
            <td colSpan={10} className="border-b-2 border-r border-b-black border-r-[#eeeeee] bg-[#e0e0e0] p-0 pr-[2px] pt-[2px] text-right font-['Liberation_Mono','Noto_Sans_CJK_SC',monospace] text-[14px] font-bold leading-[14px]">
              编号：04-02
            </td>
            <Cell fill="gray" r="light" b="thick" />
            <Cell fill="gray" r="light" b="thick" />
            <Cell fill="gray" r="light" b="thick" />
            <Cell fill="gray" r="light" b="thick" />
          </Row>
          <Row n={4} height="h-[36px]">
            <Cell span={2} fill="gray" text="工程名称" />
            <Cell span={6} fill="orange" />
            <Cell span={4} fill="gray" text="分部(子分部)工程名称" />
            <Cell span={3} />
            <Cell fill="gray" text="项目经理" />
            <Cell span={6} fill="orange" r="thick" />
          </Row>
          <Row n={5} height="h-[36px]">
            <Cell span={2} fill="gray" text="施工单位" />
            <Cell span={6} fill="orange" />
            <Cell span={4} fill="gray" text="验   收   部   位" />
            <Cell span={3} fill="orange" />
            <Cell fill="gray" text="施工图号" />
            <Cell span={6} r="thick" />
          </Row>
          <Row n={6} height="h-[36px]">
            <Cell span={3} fill="gray" text={"施工执行标准\n 名称及编号"} />
            <Cell span={5} fill="orange" />
            <Cell span={4} fill="gray" text="分项工程名称/检验批编号" />
            <Cell span={3} />
            <Cell span={2} fill="gray" text="联系单号或日期" />
            <Cell span={5} r="thick" />
          </Row>
          <Row n={7} height="h-[32px]">
            <Cell span={6} fill="gray" text="检  查  项  目" />
            <Cell span={6} fill="gray" text="检   查   情   况" />
            <Cell span={10} fill="gray" r="thick" b="light" text="说明或简图：" className={left} />
          </Row>
          {[8, 9, 10, 11, 12, 13, 14, 15].map((n) => (
            <Row key={n} n={n} height={n === 8 ? "h-[30px]" : "h-[31px]"}>
              <Cell span={6} />
              <Cell span={6} />
              {n === 8 && <Cell span={10} rows={14} r="thick" b="thick" />}
            </Row>
          ))}
          <Row n={16} height="h-[94px]">
            <Cell rows={6} fill="gray" b="thick" text={"检\n查\n验\n收\n意\n见"} className="text-center leading-[26px]" />
            <Cell span={5} b="light" />
            <Cell span={6} rows={2} b="light" />
          </Row>
          <Row n={17} height="h-[19px]">
            <Cell span={2} fill="gray" r="light" b="light" text="施工单位" className={left} />
            <Cell span={3} fill="orange" b="light" />
          </Row>
          <Row n={18} height="h-[19px]">
            <Cell span={4} fill="gray" r="light" b="light" text="项目专业质量检查员(签名)：" className={left} />
            <Cell b="light" />
            <Cell span={3} fill="gray" r="light" b="light" text="专业监理工程师(签名)：" className={left} />
            <Cell span={3} b="light" />
          </Row>
          <Row n={19} height="h-[19px]">
            <Cell span={5} fill="gray" b="light" />
            <Cell span={4} fill="gray" r="light" b="light" text="(建设单位项目专业技术负责人)" className={left} />
            <Cell span={2} b="light" />
          </Row>
          <Row n={20} height="h-[28px]">
            <Cell span={4} fill="gray" r="light" b="light" text="项目专业技术负责人(签名)：" className={left} />
            <Cell b="light" />
            <Cell span={6} fill="gray" b="light" />
          </Row>
          <Row n={21} height="h-[26px]">
            <Cell span={5} b="thick" text="年  月  日" className="pr-[2px] text-right" />
            <Cell span={6} b="thick" text="年  月  日" className="pr-[2px] text-right" />
          </Row>
        </tbody>
      </table>
    </div>
  );
}

/* ---------- page ---------- */

export default function App() {
  return (
    <div className={`relative flex h-screen w-full flex-col overflow-hidden bg-[#ececec] ${CJK} text-black`}>
      <header className="flex h-[19px] shrink-0 items-start overflow-hidden border-b-2 border-[#6d6640] bg-gradient-to-b from-[#a69a1e] to-[#7f7510]">
        <HouseLogo />
        <h1 className="ml-[5px] whitespace-nowrap font-['Open_Sans','Noto_Sans_CJK_SC',sans-serif] text-[12px] font-normal leading-[13px] text-[#f4f2dc]">
          筑业资料浙江版 - [D:\筑业建筑系列软件\浙江省工程资料软件\工程\1.zyzl]
        </h1>
      </header>
      <MenuBar />
      <MainToolbar />
      <div className="h-[3px] shrink-0 border-b border-[#a0a0a0]" />
      <main className="flex min-h-0 flex-1">
        <SidePanel />
        <Splitter />
        <section className="flex min-w-0 flex-1 flex-col bg-white pl-[3px] pt-[4px]">
          <div className="flex min-h-0 flex-1 flex-col bg-[#ececec]">
            <FormatBars />
            <Sheet />
          </div>
        </section>
      </main>
      <svg width="164" height="84" viewBox="0 0 164 84" className="pointer-events-none absolute left-[291px] top-[408px]" aria-hidden="true">
        <path d="M10 8L162 83" stroke="#00f" strokeWidth="2" />
        <path d="M1 3L15 1 8 15z" fill="#00f" />
      </svg>
    </div>
  );
}
